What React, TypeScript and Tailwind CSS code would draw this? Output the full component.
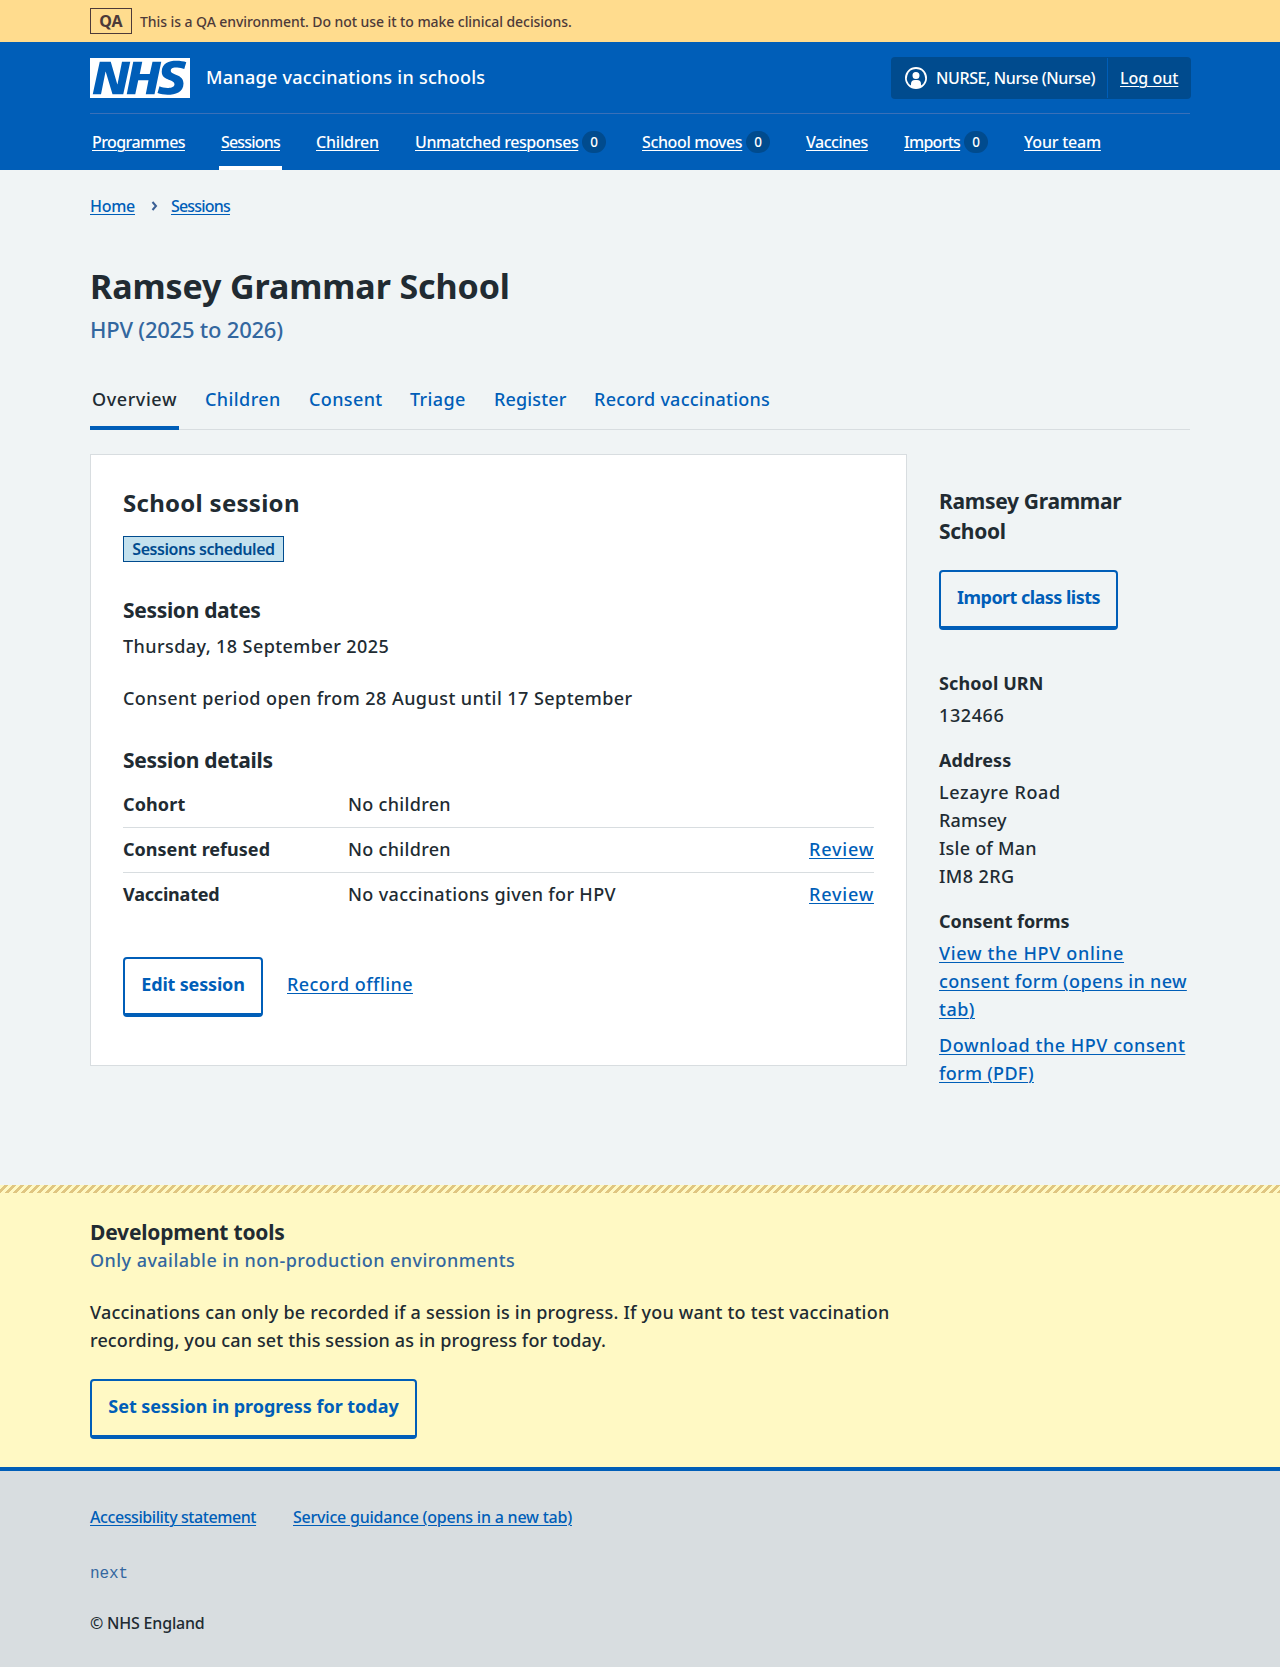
import React from "react";

const link = "text-[#005eb8] underline underline-offset-[1.5px] decoration-1";

function NhsLogo() {
  return (
    <svg width="100" height="40" viewBox="0 0 200 80" className="shrink-0 text-white" role="img" aria-label="NHS">
      <path
        fill="currentcolor"
        d="M200 0v80H0V0h200Zm-27.5 5.5c-14.5 0-29 5-29 22 0 10.2 7.7 13.5 14.7 16.3l.7.3c5.4 2 10.1 3.9 10.1 8.4 0 6.5-8.5 7.5-14 7.5s-12.5-1.5-16-3.5L135 70c5.5 2 13.5 3.5 20 3.5 15.5 0 32-4.5 32-22.5 0-19.5-25.5-16.5-25.5-25.5 0-5.5 5.5-6.5 12.5-6.5a35 35 0 0 1 14.5 3l4-13.5c-4.5-2-12-3-20-3Zm-131 2h-22l-14 65H22l9-45h.5l13.5 45h21.5l14-65H64l-9 45h-.5l-13-45Zm63 0h-18l-13 65h17l6-28H117l-5.5 28H129l13.5-65H125L119.5 32h-20l5-24.5Z"
      />
    </svg>
  );
}

function UserIcon() {
  return (
    <svg width="24" height="24" viewBox="0 0 24 24" className="shrink-0" aria-hidden="true">
      <path
        fill="currentcolor"
        d="M12 1a11 11 0 1 1 0 22 11 11 0 0 1 0-22Zm0 2a9 9 0 0 0-5 16.5V18a4 4 0 0 1 4-4h2a4 4 0 0 1 4 4v1.5A9 9 0 0 0 12 3Zm0 3a3.5 3.5 0 1 1-3.5 3.5A3.4 3.4 0 0 1 12 6Z"
      />
    </svg>
  );
}

function Button({ children, className = "" }: { children: React.ReactNode; className?: string }) {
  return (
    <button
      className={`flex h-[60px] justify-center rounded-[4px] border-2 border-b-4 border-[#005eb8] pt-[11px] text-[18px] leading-[28px] font-bold whitespace-nowrap text-[#005eb8] ${className}`}
    >
      {children}
    </button>
  );
}

const nav = [
  { label: "Programmes", tracking: "tracking-[-0.58px]", width: "w-[93px]" },
  { label: "Sessions", tracking: "tracking-[-0.81px]", width: "w-[59px]", active: true },
  { label: "Children", tracking: "tracking-[-0.18px]", width: "w-[63px]" },
  { label: "Unmatched responses", tracking: "tracking-[-0.42px]", width: "w-[163px]", count: 0 },
  { label: "School moves", tracking: "tracking-[-0.37px]", width: "w-[100px]", count: 0 },
  { label: "Vaccines", tracking: "tracking-[-0.48px]", width: "w-[62px]" },
  { label: "Imports", tracking: "tracking-[-0.72px]", width: "w-[56px]", count: 0 },
  { label: "Your team", tracking: "tracking-[-0.22px]", width: "w-[76px]" },
];

const tabs = [
  { label: "Overview", tracking: "tracking-[0.58px]", width: "w-[85px]", active: true },
  { label: "Children", tracking: "tracking-[0.42px]", width: "w-[76px]" },
  { label: "Consent", tracking: "tracking-[0.38px]", width: "w-[73px]" },
  { label: "Triage", tracking: "tracking-[0.38px]", width: "w-[56px]" },
  { label: "Register", tracking: "tracking-[0.14px]", width: "w-[72px]" },
  { label: "Record vaccinations", tracking: "tracking-[0.25px]", width: "w-[176px]" },
];

const rows = [
  { key: "Cohort", keyTracking: "tracking-[0.12px]", value: "No children", tracking: "tracking-[0.31px]" },
  { key: "Consent refused", keyTracking: "tracking-[0.02px]", value: "No children", tracking: "tracking-[0.31px]", review: true },
  { key: "Vaccinated", keyTracking: "tracking-[-0.2px]", value: "No vaccinations given for HPV", tracking: "tracking-[0.34px]", review: true },
];

export default function App() {
  return (
    <div className="min-h-[1667px] bg-[#f0f4f5] font-['Noto_Sans',sans-serif] text-[18px] leading-[28px] font-medium text-[#212b32]">
      <div className="h-[42px] bg-[#ffdc8e] text-[#4d3a39]">
        <div className="mx-auto flex w-[1100px] items-start pt-2">
          <strong className="flex h-[26px] w-[42px] justify-center border border-[#4d3a39] text-[16px] leading-[24px] font-bold">
            QA
          </strong>
          <span className="ml-2 pt-1 text-[14px] leading-[20px] tracking-[-0.07px] whitespace-nowrap">
            This is a QA environment. Do not use it to make clinical decisions.
          </span>
        </div>
      </div>

      <header className="h-[128px] bg-[#005eb8] text-white">
        <div className="mx-auto w-[1100px]">
          <div className="flex h-[72px] items-start border-b border-[#3a70b8] pt-4">
            <NhsLogo />
            <span className="mt-[5px] ml-4 tracking-[0.27px] whitespace-nowrap">Manage vaccinations in schools</span>
            <div className="-mt-px -mr-px ml-auto flex h-[42px] w-[300px] items-stretch rounded-[4px] bg-[#004b8e] text-[16px] leading-[24px]">
              <div className="my-px flex w-[217px] items-center border-r border-[#005eb8] pl-[13px]">
                <UserIcon />
                <span className="ml-2 tracking-[-0.4px] whitespace-nowrap">NURSE, Nurse (Nurse)</span>
              </div>
              <a className="flex items-center pl-3 whitespace-nowrap underline underline-offset-[1.5px] decoration-1">Log out</a>
            </div>
          </div>
          <nav className="flex gap-8 text-[16px] leading-[24px]">
            {nav.map((n) => (
              <div
                key={n.label}
                className={`flex h-[56px] items-start px-0.5 pt-4 ${n.active ? "border-b-4 border-white" : ""}`}
              >
                <a className={`${n.width} ${n.tracking} whitespace-nowrap underline underline-offset-[1.5px] decoration-1`}>{n.label}</a>
                {n.count !== undefined && (
                  <span className="mt-px ml-1 h-[22px] w-6 rounded-full bg-[#004b8e] text-center text-[13.5px] leading-[23px]">
                    {n.count}
                  </span>
                )}
              </div>
            ))}
          </nav>
        </div>
      </header>

      <div className="mx-auto h-[1015px] w-[1100px]">
        <nav className="flex items-start pt-6 text-[16px] leading-[24px]">
          <a className={`${link} w-[45px] tracking-[-0.27px]`}>Home</a>
          <svg width="7" height="10" viewBox="0 0 7 10" className="mt-[7px] ml-[16px]" fill="none" stroke="#3a5f94" strokeWidth="2">
            <path d="M1.5 1 5 5 1.5 9" />
          </svg>
          <a className={`${link} ml-[13px] tracking-[-0.81px]`}>Sessions</a>
        </nav>

        <h1 className="mt-[46px] text-[34px] leading-[44px] font-bold tracking-[-0.1px]">Ramsey Grammar School</h1>
        <p className="mt-[6px] text-[22px] leading-[30px] tracking-[-0.22px] text-[#33679f]">HPV (2025 to 2026)</p>

        <nav className="mt-[41px] flex h-[45px] gap-6 border-b border-[#d8dde0]">
          {tabs.map((t) => (
            <a
              key={t.label}
              className={`h-[45px] px-0.5 whitespace-nowrap ${t.active ? "border-b-4 border-[#005eb8]" : "text-[#005eb8]"}`}
            >
              <span className={`block ${t.width} ${t.tracking}`}>{t.label}</span>
            </a>
          ))}
        </nav>

        <div className="mt-6 flex items-start">
          <main className="h-[612px] w-[817px] border border-[#d8dde0] bg-white px-8 pt-8">
            <h2 className="text-[24px] leading-[32px] font-bold tracking-[0.28px]">School session</h2>
            <strong className="mt-[17px] flex h-[26px] w-[161px] justify-center border border-[#004b8e] bg-[#c3e1ee] text-[16px] leading-[24px] font-semibold tracking-[-0.44px] whitespace-nowrap text-[#004b8e]">
              Sessions scheduled
            </strong>
            <h3 className="mt-[33px] text-[21px] leading-[30px] font-bold tracking-[-0.32px]">Session dates</h3>
            <p className="mt-[7px] tracking-[0.42px]">Thursday, 18 September 2025</p>
            <p className="mt-6 tracking-[0.44px]">Consent period open from 28 August until 17 September</p>
            <h3 className="mt-[33px] text-[21px] leading-[30px] font-bold tracking-[-0.3px]">Session details</h3>
            <dl className="mt-2">
              {rows.map((r, i) => (
                <div key={r.key} className={`flex h-[45px] pt-[7px] ${i < rows.length - 1 ? "border-b border-[#d8dde0]" : ""}`}>
                  <dt className={`w-[225px] font-bold ${r.keyTracking}`}>{r.key}</dt>
                  <dd className={`grow ${r.tracking}`}>{r.value}</dd>
                  {r.review && (
                    <dd>
                      <a className={`${link} tracking-[0.8px]`}>Review</a>
                    </dd>
                  )}
                </div>
              ))}
            </dl>
            <div className="mt-[39px] flex">
              <Button className="w-[140px] tracking-[-0.18px]">Edit session</Button>
              <a className={`${link} mt-[13px] ml-6 tracking-[0.44px]`}>Record offline</a>
            </div>
          </main>

          <aside className="ml-8 w-[251px] pt-[32px]">
            <h2 className="w-[220px] text-[21px] leading-[30px] font-bold tracking-[-0.3px]">Ramsey Grammar School</h2>
            <Button className="mt-6 w-[179px] tracking-[-0.54px]">Import class lists</Button>
            <h3 className="mt-[39px] font-bold tracking-[0.1px]">School URN</h3>
            <p className="mt-1 tracking-[0.6px]">132466</p>
            <h3 className="mt-[17px] font-bold tracking-[0.08px]">Address</h3>
            <p className="mt-1">
              <span className="block tracking-[0.63px]">Lezayre Road</span>
              <span className="block tracking-[0.12px]">Ramsey</span>
              <span className="block tracking-[0.23px]">Isle of Man</span>
              <span className="block tracking-[0.42px]">IM8 2RG</span>
            </p>
            <h3 className="mt-[17px] font-bold tracking-[-0.06px]">Consent forms</h3>
            <p className="mt-1 whitespace-nowrap">
              <a className={link}>
                <span className="tracking-[0.68px]">View the HPV online</span>
                <br />
                <span className="tracking-[0.33px]">consent form (opens in new</span>
                <br />
                <span className="tracking-[0.5px]">tab)</span>
              </a>
            </p>
            <p className="mt-2 whitespace-nowrap">
              <a className={link}>
                <span className="tracking-[0.54px]">Download the HPV consent</span>
                <br />
                <span className="tracking-[0.29px]">form (PDF)</span>
              </a>
            </p>
          </aside>
        </div>
      </div>

      <section className="h-[282px] bg-[#fff9c4]">
        <div className="h-2 bg-[linear-gradient(-45deg,#e0c681_25%,transparent_25%,transparent_50%,#e0c681_50%,#e0c681_75%,transparent_75%)] bg-[length:8px_8px]" />
        <div className="mx-auto w-[1100px] pt-[24px]">
          <h2 className="text-[21px] leading-[30px] font-bold tracking-[-0.2px]">Development tools</h2>
          <p className="-mt-px tracking-[0.45px] text-[#33679f]">Only available in non-production environments</p>
          <p className="mt-6 whitespace-nowrap">
            <span className="block tracking-[0.2px]">
              Vaccinations can only be recorded if a session is in progress. If you want to test vaccination
            </span>
            <span className="block tracking-[0.14px]">recording, you can set this session as in progress for today.</span>
          </p>
          <Button className="mt-[25px] w-[327px] tracking-[-0.02px]">Set session in progress for today</Button>
        </div>
      </section>

      <footer className="h-[200px] border-t-4 border-[#005eb8] bg-[#d8dde0] text-[16px] leading-[24px]">
        <div className="mx-auto w-[1100px] pt-[34px]">
          <div className="flex whitespace-nowrap">
            <div className="w-[203px]">
              <a className={`${link} tracking-[-0.42px]`}>Accessibility statement</a>
            </div>
            <a className={`${link} tracking-[-0.22px]`}>Service guidance (opens in a new tab)</a>
          </div>
          <p className="mt-[33px] font-['Liberation_Mono',monospace] font-normal tracking-[-0.1px] text-[#33679f]">next</p>
          <p className="mt-[25px] tracking-[-0.2px]">© NHS England</p>
        </div>
      </footer>
    </div>
  );
}
